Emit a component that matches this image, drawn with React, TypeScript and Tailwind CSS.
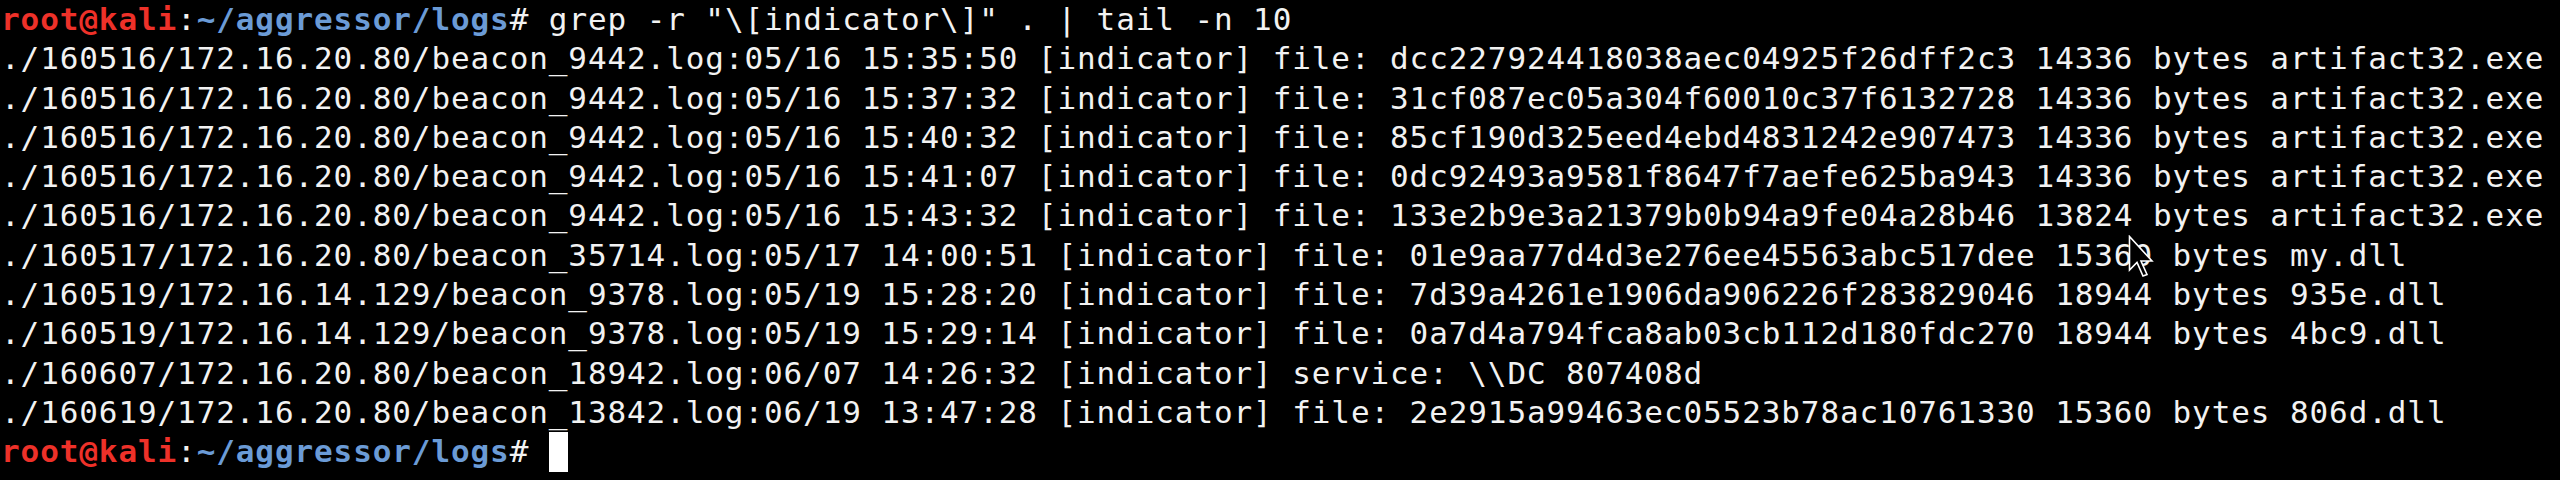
import React from 'react';

// Output of the grep, one entry per terminal row
const lines = [
  './160516/172.16.20.80/beacon_9442.log:05/16 15:35:50 [indicator] file: dcc227924418038aec04925f26dff2c3 14336 bytes artifact32.exe',
  './160516/172.16.20.80/beacon_9442.log:05/16 15:37:32 [indicator] file: 31cf087ec05a304f60010c37f6132728 14336 bytes artifact32.exe',
  './160516/172.16.20.80/beacon_9442.log:05/16 15:40:32 [indicator] file: 85cf190d325eed4ebd4831242e907473 14336 bytes artifact32.exe',
  './160516/172.16.20.80/beacon_9442.log:05/16 15:41:07 [indicator] file: 0dc92493a9581f8647f7aefe625ba943 14336 bytes artifact32.exe',
  './160516/172.16.20.80/beacon_9442.log:05/16 15:43:32 [indicator] file: 133e2b9e3a21379b0b94a9fe04a28b46 13824 bytes artifact32.exe',
  './160517/172.16.20.80/beacon_35714.log:05/17 14:00:51 [indicator] file: 01e9aa77d4d3e276ee45563abc517dee 15360 bytes my.dll',
  './160519/172.16.14.129/beacon_9378.log:05/19 15:28:20 [indicator] file: 7d39a4261e1906da906226f283829046 18944 bytes 935e.dll',
  './160519/172.16.14.129/beacon_9378.log:05/19 15:29:14 [indicator] file: 0a7d4a794fca8ab03cb112d180fdc270 18944 bytes 4bc9.dll',
  './160607/172.16.20.80/beacon_18942.log:06/07 14:26:32 [indicator] service: \\\\DC 807408d',
  './160619/172.16.20.80/beacon_13842.log:06/19 13:47:28 [indicator] file: 2e2915a99463ec05523b78ac10761330 15360 bytes 806d.dll',
];

const Prompt: React.FC = () => (
  <>
    <span className="font-bold text-[#ee3129]">root@kali</span>
    <span>:</span>
    <span className="font-bold text-[#6b9bd6]">~/aggressor/logs</span>
    <span># </span>
  </>
);

export default function App() {
  return (
    <div className="relative w-[2560px] h-[480px] overflow-hidden bg-black">
      <div className="pl-[1px] flex flex-col font-['DejaVu_Sans_Mono',monospace] text-[31px] tracking-[0.9px] leading-[39.3px] text-[#f2f2f2] whitespace-pre">
        <div>
          <Prompt />
          {'grep -r "\\[indicator\\]" . | tail -n 10'}
        </div>
        {lines.map((l, i) => (
          <div key={i}>{l}</div>
        ))}
        <div className="flex">
          <Prompt />
          <span className="w-[19px] h-[39.3px] bg-white" />
        </div>
      </div>

      {/* mouse pointer left over the text */}
      <svg className="absolute left-[2128px] top-[235px]" width="26" height="44" viewBox="0 0 26 44">
        <path d="M1.5 1.5 L1.5 35 L9 27.5 L15 41 L19 39.5 L13 26 L24 26 Z" fill="black" stroke="white" strokeWidth="1.6" strokeLinejoin="miter" />
      </svg>
    </div>
  );
}
